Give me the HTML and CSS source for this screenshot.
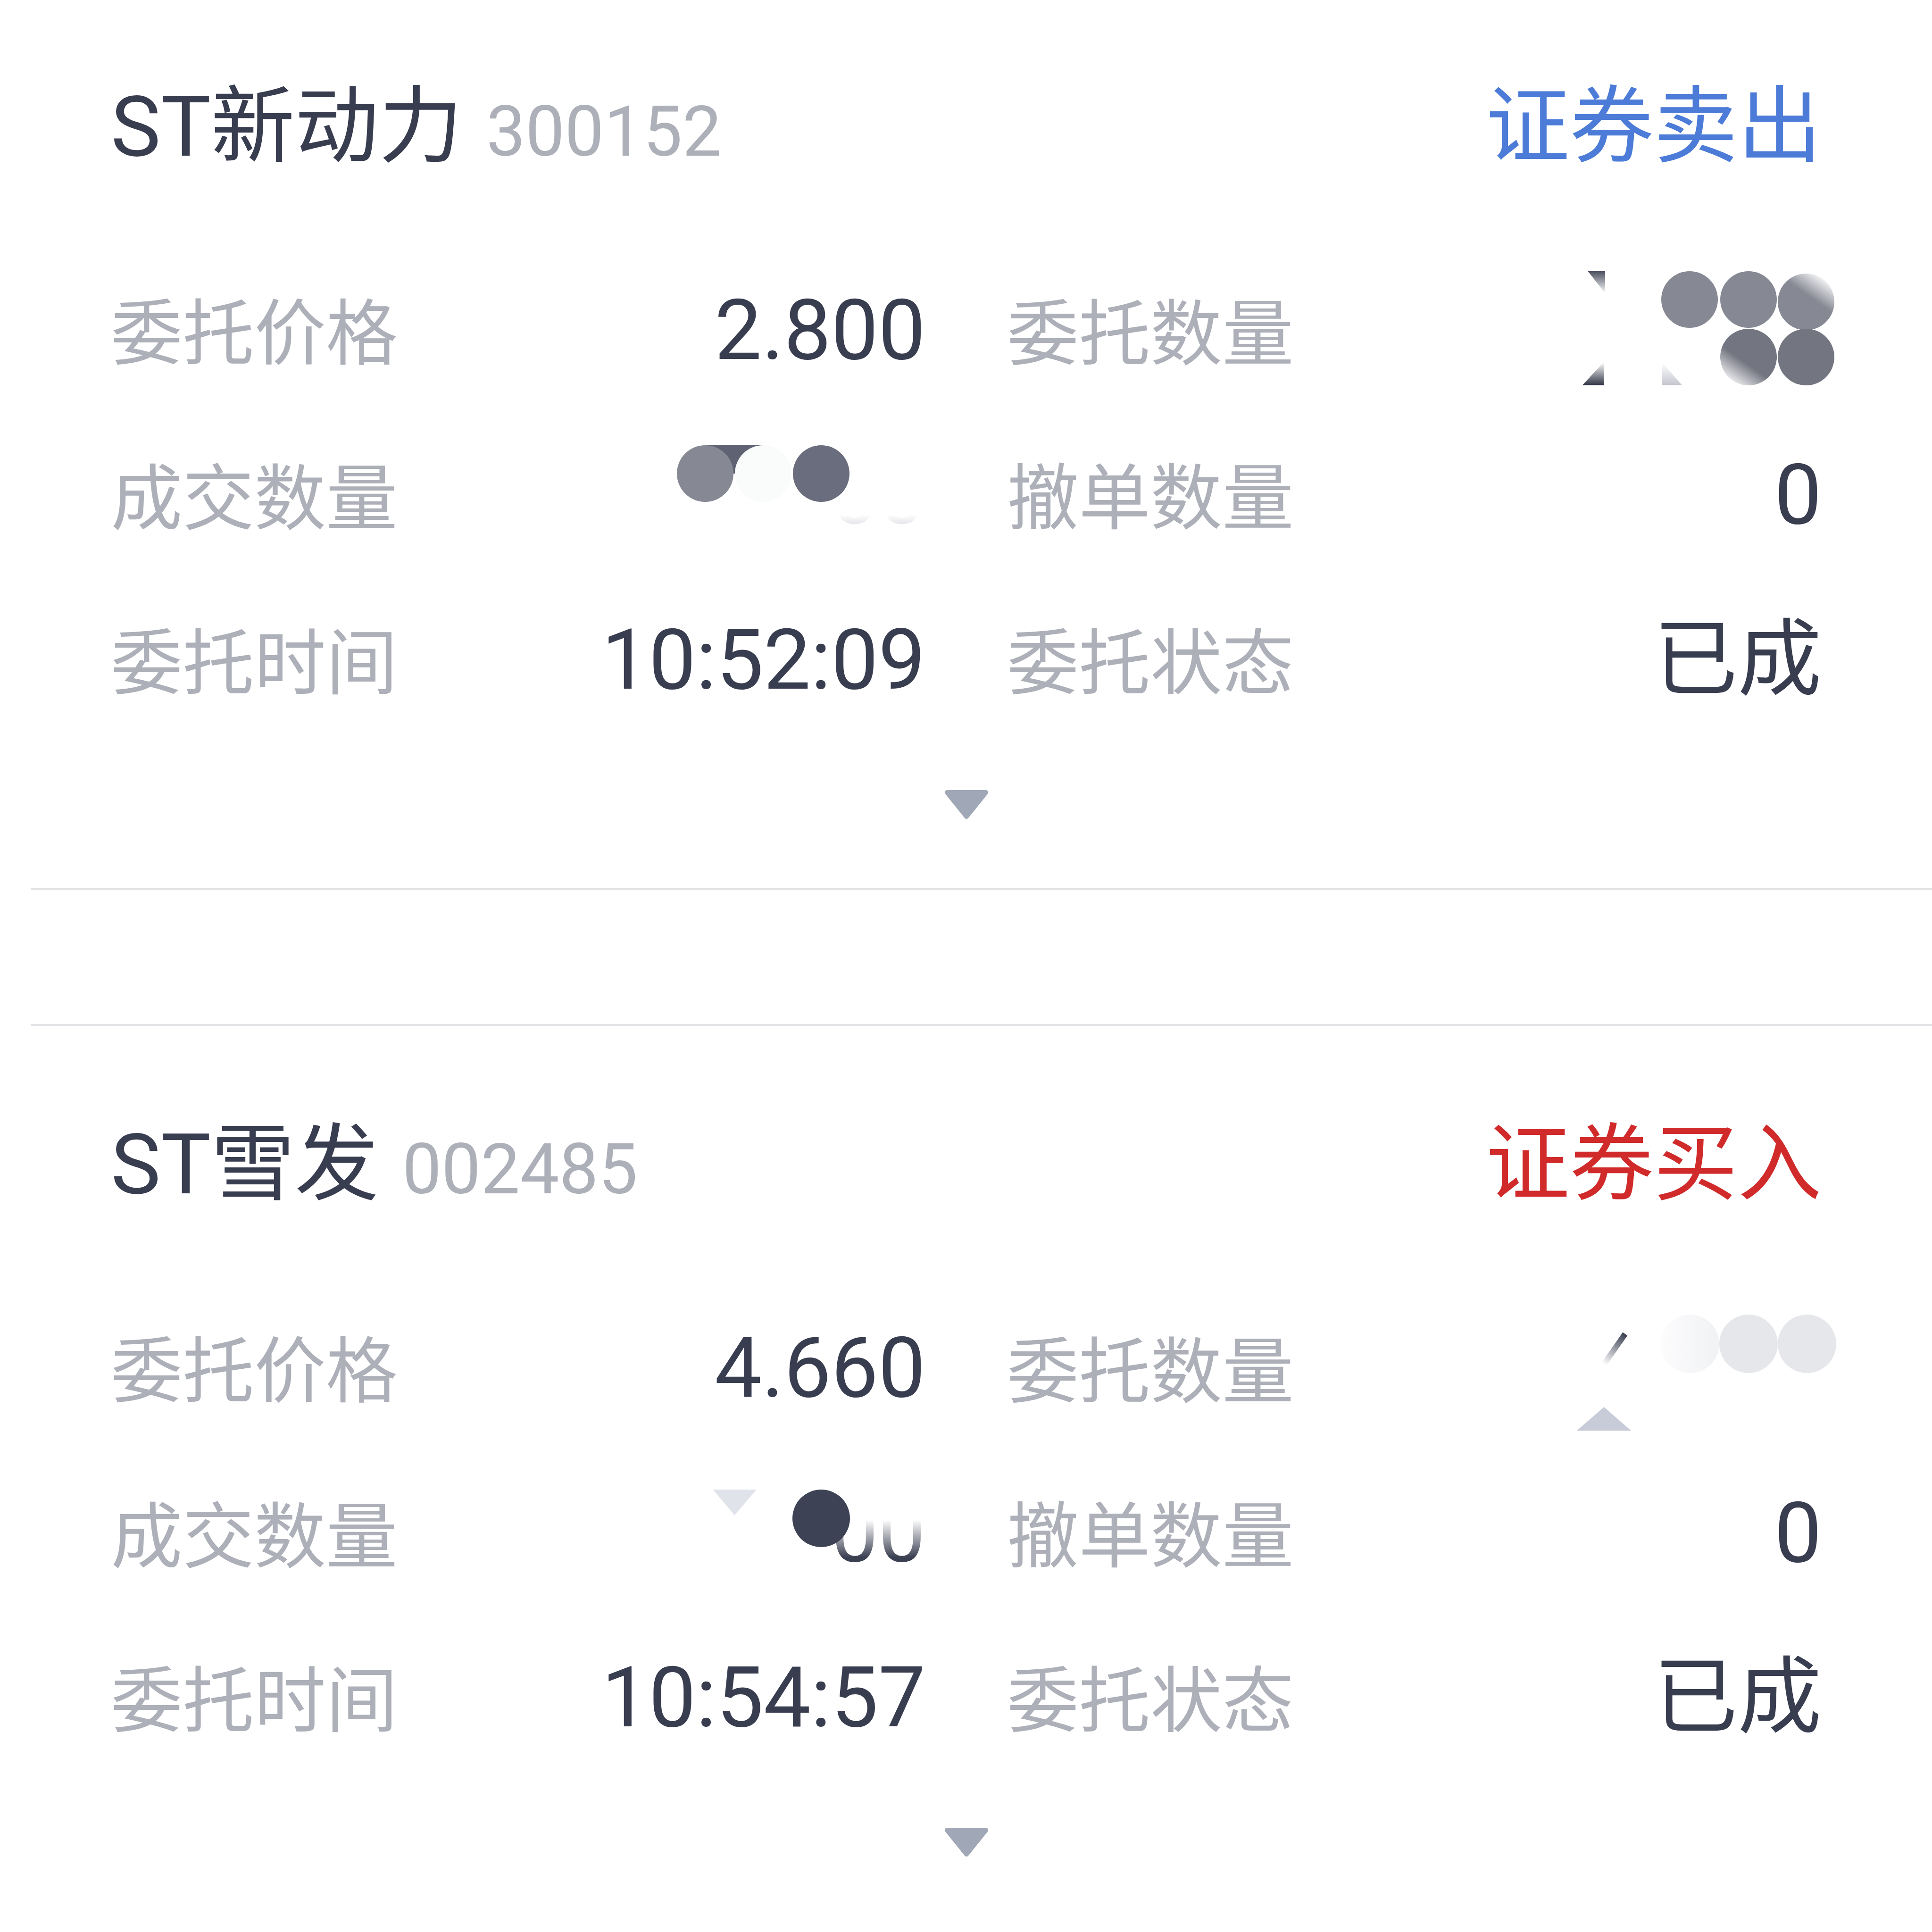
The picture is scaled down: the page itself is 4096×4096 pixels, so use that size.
FILE: index.html
```html
<!DOCTYPE html>
<html lang="zh-CN">
<head>
    <meta charset="UTF-8">
    <meta name="viewport" content="width=device-width, initial-scale=1.0">
    <title>当日委托</title>
    <link rel="stylesheet" href="styles.css">
</head>
<body>
  <div class="orders">

    <section class="order">
      <div class="order-head">
        <span class="stock-name">ST新动力</span>
        <span class="stock-code">300152</span>
        <span class="side sell">证券卖出</span>
      </div>
      <div class="order-grid">
        <div class="cell"><span class="label">委托价格</span><span class="value">2.800</span></div>
        <div class="cell">
          <span class="label">委托数量</span>
          <span class="blot blot-a">
            <i class="cusp c1"></i><i class="cusp c2"></i><i class="cusp c3"></i>
            <i class="dot d1"></i><i class="dot d2"></i><i class="dot d3"></i>
            <i class="dot d4"></i><i class="dot d5"></i>
          </span>
        </div>
        <div class="cell">
          <span class="label">成交数量</span>
          <span class="blot blot-b">
            <span class="ghost">00</span>
            <i class="band"></i>
            <i class="dot d1"></i><i class="dot d2"></i><i class="dot d3"></i>
          </span>
        </div>
        <div class="cell"><span class="label">撤单数量</span><span class="value">0</span></div>
        <div class="cell"><span class="label">委托时间</span><span class="value">10:52:09</span></div>
        <div class="cell"><span class="label">委托状态</span><span class="value">已成</span></div>
      </div>
      <div class="toggle">
        <svg width="98" height="63" viewBox="0 0 98 63"><path d="M8 6 H90 L49 57 Z" fill="#a0a7b7" stroke="#a0a7b7" stroke-width="10" stroke-linejoin="round"/></svg>
      </div>
    </section>

    <div class="spacer"></div>

    <section class="order">
      <div class="order-head">
        <span class="stock-name">ST雪发</span>
        <span class="stock-code">002485</span>
        <span class="side buy">证券买入</span>
      </div>
      <div class="order-grid">
        <div class="cell"><span class="label">委托价格</span><span class="value">4.660</span></div>
        <div class="cell">
          <span class="label">委托数量</span>
          <span class="blot blot-c">
            <i class="stroke"></i><i class="cusp"></i>
            <i class="dot d1"></i><i class="dot d2"></i><i class="dot d3"></i>
          </span>
        </div>
        <div class="cell">
          <span class="label">成交数量</span>
          <span class="blot blot-d">
            <span class="ghost">00</span>
            <i class="cusp"></i>
            <i class="dot d1"></i>
          </span>
        </div>
        <div class="cell"><span class="label">撤单数量</span><span class="value">0</span></div>
        <div class="cell"><span class="label">委托时间</span><span class="value">10:54:57</span></div>
        <div class="cell"><span class="label">委托状态</span><span class="value">已成</span></div>
      </div>
      <div class="toggle">
        <svg width="98" height="63" viewBox="0 0 98 63"><path d="M8 6 H90 L49 57 Z" fill="#a0a7b7" stroke="#a0a7b7" stroke-width="10" stroke-linejoin="round"/></svg>
      </div>
    </section>

  </div>
</body>
</html>
```

FILE: styles.css
```css
body {
    margin: 0;
    background: #fff;
    font-family: Roboto, "Noto Sans CJK SC", sans-serif;
    color: #383d50;
}
.orders {
    margin-top: -25px;
}
.order {
    padding: 188px 234px 118px 235px;
}
.order-head {
    display: flex;
    align-items: baseline;
    line-height: 1.2;
    margin-bottom: 150px;
}
.stock-name {
    font-size: 178px;
}
.stock-code {
    font-size: 148px;
    color: #adb0b8;
    margin-left: 50px;
}
.side {
    margin-left: auto;
    font-size: 178px;
}
.sell {
    color: #4c7bd8;
}
.buy {
    color: #d02a2b;
}

.order-grid {
    display: grid;
    grid-template-columns: 1fr 1fr;
    column-gap: 173px;
}
.cell {
    display: flex;
    justify-content: space-between;
    align-items: baseline;
    padding: 67px 0 69px;
    line-height: 1.2;
}
.label {
    font-size: 152px;
    color: #adb0b8;
}
.value {
    font-size: 178px;
}

.toggle {
    display: flex;
    justify-content: center;
    align-items: center;
    height: 120px;
    margin-top: 70px;
}

.spacer {
    margin-left: 65px;
    height: 284px;
    border-top: 4px solid #e4e4e7;
    border-bottom: 4px solid #e4e4e7;
}

/* smudged numbers */
.blot {
    position: relative;
    height: 192px;
    margin-top: -24px;
}
.blot-a, .blot-c {
    width: 520px;
}
.blot-b, .blot-d {
    width: 542px;
}
.dot, .cusp, .band, .stroke, .ghost {
    position: absolute;
}
.dot {
    width: 120px;
    height: 120px;
    border-radius: 50%;
}
.ghost {
    right: 0;
    top: 40px;
    font-size: 178px;
    line-height: 1;
}

.blot-a .d1 { left: 180px; top: 5px; background: #868893; }
.blot-a .d2 { left: 305px; top: 5px; background: #868893; }
.blot-a .d3 { left: 427px; top: 10px; background: linear-gradient(215deg, #fff 10%, #868893 42%); }
.blot-a .d4 { left: 305px; top: 127px; background: linear-gradient(35deg, #fff 8%, #737580 42%); }
.blot-a .d5 { left: 427px; top: 127px; background: #737580; }
.blot-a .c1 {
    left: 13px; top: 198px; width: 45px; height: 49px;
    clip-path: polygon(100% 0, 100% 100%, 0 100%);
    background: linear-gradient(to top, #2f3445, rgba(47, 52, 69, 0));
}
.blot-a .c2 {
    left: 24px; top: 5px; width: 37px; height: 47px;
    clip-path: polygon(0 0, 100% 0, 100% 100%);
    background: linear-gradient(#4a4e5e, rgba(74, 78, 94, 0));
}
.blot-a .c3 {
    left: 181px; top: 198px; width: 43px; height: 49px;
    clip-path: polygon(0 0, 100% 100%, 0 100%);
    background: linear-gradient(to top, #c4c6ce, rgba(196, 198, 206, 0));
}

.blot-b .ghost {
    color: #cfd1d8;
    -webkit-mask-image: linear-gradient(transparent 74%, #000 95%);
    mask-image: linear-gradient(transparent 74%, #000 95%);
}
.blot-b .band { left: 75px; top: 25px; width: 123px; height: 60px; background: #5f6272; }
.blot-b .d1 { left: 15px; top: 25px; background: #868893; }
.blot-b .d2 { left: 138px; top: 25px; background: #fafbfb; }
.blot-b .d3 { left: 261px; top: 25px; background: #6a6d7d; }

.blot-c .dot {
    width: 124px;
    height: 124px;
}
.blot-c .d1 { left: 179px; top: 17px; background: linear-gradient(90deg, #fcfcfd, #f1f2f4); }
.blot-c .d2 { left: 303px; top: 17px; background: #e6e7ea; }
.blot-c .d3 { left: 427px; top: 17px; background: #e6e7ea; }
.blot-c .stroke {
    left: 75px; top: 51px; width: 12px; height: 78px;
    transform: rotate(35deg);
    background: linear-gradient(#3a3f51, rgba(58, 63, 81, 0));
}
.blot-c .cusp {
    left: 1px; top: 213px; width: 115px; height: 50px;
    clip-path: polygon(50% 0, 100% 100%, 0 100%);
    background: #c8ccd8;
}

.blot-d .ghost {
    color: #3a3f51;
    -webkit-mask-image: linear-gradient(transparent 35%, #000 80%);
    mask-image: linear-gradient(transparent 35%, #000 80%);
}
.blot-d .cusp {
    left: 91px; top: 38px; width: 93px; height: 55px;
    clip-path: polygon(0 0, 100% 0, 50% 100%);
    background: #e1e3ea;
}
.blot-d .d1 { left: 260px; top: 38px; width: 122px; height: 122px; background: #3d4254; }
```
